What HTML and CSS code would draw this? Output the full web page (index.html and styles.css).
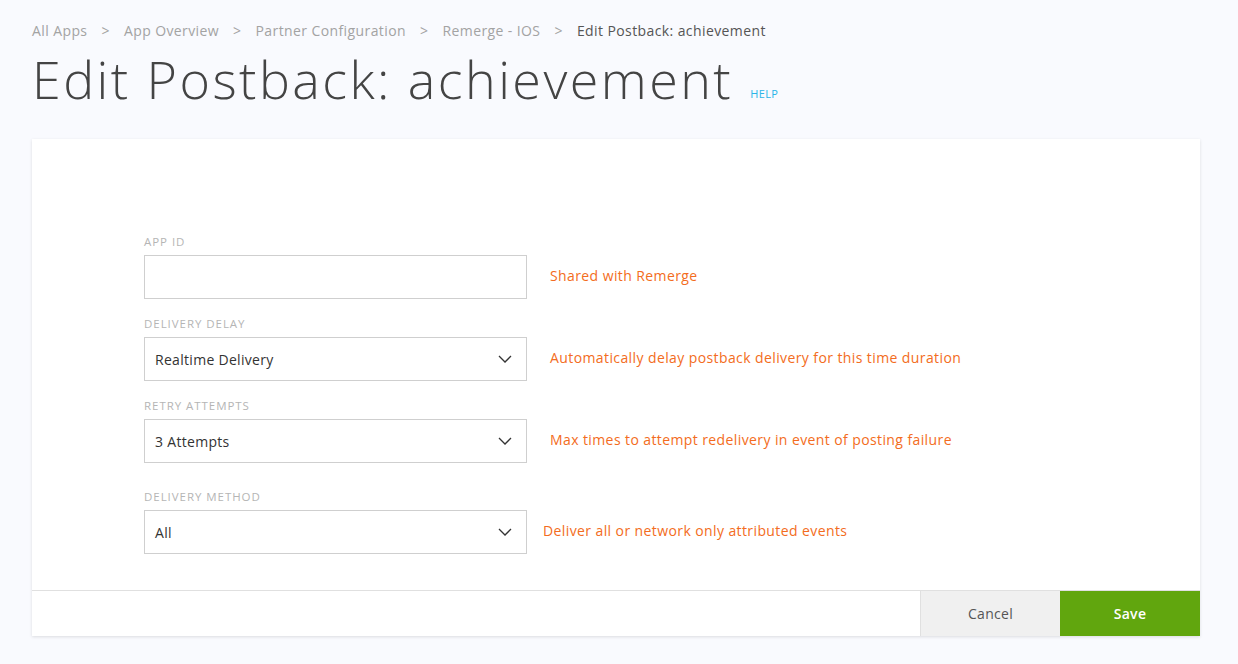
FILE: index.html
```html
<!DOCTYPE html>
<html lang="en">
<head>
    <meta charset="UTF-8">
    <meta name="viewport" content="width=device-width, initial-scale=1.0">
    <title>Edit Postback: achievement</title>
    <link rel="stylesheet" href="styles.css">
</head>
<body>
    <div class="page">
        <div class="breadcrumbs">
            <a href="#">All Apps</a>
            <span class="sep">&gt;</span>
            <a href="#">App Overview</a>
            <span class="sep">&gt;</span>
            <a href="#">Partner Configuration</a>
            <span class="sep">&gt;</span>
            <a href="#">Remerge - IOS</a>
            <span class="sep">&gt;</span>
            <span class="current">Edit Postback: achievement</span>
        </div>

        <div class="title-row">
            <h1>Edit Postback: achievement</h1>
            <a href="#" class="help">HELP</a>
        </div>

        <div class="card">
            <form class="postback-form">
                <div class="field">
                    <label>APP ID</label>
                    <div class="field-row">
                        <input type="text" class="control">
                        <span class="hint">Shared with Remerge</span>
                    </div>
                </div>

                <div class="field">
                    <label>DELIVERY DELAY</label>
                    <div class="field-row">
                        <div class="control select">
                            <span>Realtime Delivery</span>
                            <svg width="14" height="8" viewBox="0 0 14 8"><path d="M1 1l6 6 6-6" fill="none" stroke="#333" stroke-width="1.3"/></svg>
                        </div>
                        <span class="hint">Automatically delay postback delivery for this time duration</span>
                    </div>
                </div>

                <div class="field">
                    <label>RETRY ATTEMPTS</label>
                    <div class="field-row">
                        <div class="control select">
                            <span>3 Attempts</span>
                            <svg width="14" height="8" viewBox="0 0 14 8"><path d="M1 1l6 6 6-6" fill="none" stroke="#333" stroke-width="1.3"/></svg>
                        </div>
                        <span class="hint">Max times to attempt redelivery in event of posting failure</span>
                    </div>
                </div>

                <div class="field method">
                    <label>DELIVERY METHOD</label>
                    <div class="field-row">
                        <div class="control select">
                            <span>All</span>
                            <svg width="14" height="8" viewBox="0 0 14 8"><path d="M1 1l6 6 6-6" fill="none" stroke="#333" stroke-width="1.3"/></svg>
                        </div>
                        <span class="hint narrow">Deliver all or network only attributed events</span>
                    </div>
                </div>
            </form>

            <div class="card-footer">
                <button type="button" class="btn cancel">Cancel</button>
                <button type="button" class="btn save">Save</button>
            </div>
        </div>
    </div>
</body>
</html>
```

FILE: styles.css
```css
body {
    font-family: "Open Sans", Arial, sans-serif;
    margin: 0;
    padding: 0;
    background-color: #f9fafe;
    color: #444;
}

.page {
    padding: 21px 38px 28px 32px;
}

.breadcrumbs {
    font-size: 14px;
    letter-spacing: 0.4px;
    color: #a3a3a3;
    height: 20px;
    line-height: 20px;
}

.breadcrumbs a {
    color: #a3a3a3;
    text-decoration: none;
}

.breadcrumbs .sep {
    margin: 0 10px;
}

.breadcrumbs .current {
    color: #555;
}

.title-row {
    display: flex;
    align-items: flex-end;
    gap: 17px;
    height: 60px;
    margin-top: 8px;
    margin-bottom: 30px;
}

h1 {
    font-weight: 300;
    font-size: 52px;
    line-height: 60px;
    margin: 0;
    color: #444;
    letter-spacing: 2.45px;
}

.help {
    font-size: 11px;
    letter-spacing: 0.4px;
    color: #2ab4e8;
    text-decoration: none;
    margin-bottom: 8px;
}

.card {
    background: white;
    box-shadow: 0 1px 3px rgba(0, 0, 0, 0.12);
}

.postback-form {
    padding: 96px 0 36px 112px;
}

.field {
    margin-bottom: 18px;
}

.field.method {
    margin-top: 27px;
    margin-bottom: 0;
}

.field label {
    display: block;
    font-size: 11.5px;
    color: #b5b5b5;
    letter-spacing: 0.95px;
    height: 14px;
    line-height: 14px;
    margin-bottom: 6px;
}

.field-row {
    display: flex;
    align-items: center;
}

.control {
    box-sizing: border-box;
    width: 383px;
    height: 44px;
    border: 1px solid #cfcfcf;
    background: white;
    font-family: inherit;
    font-size: 14px;
    letter-spacing: 0.3px;
    color: #333;
    padding: 0 14px 0 10px;
    margin: 0;
}

.select {
    display: flex;
    align-items: center;
    justify-content: space-between;
}

.hint {
    margin-left: 23px;
    margin-top: -4px;
    font-size: 14px;
    letter-spacing: 0.4px;
    color: #f36c21;
}

.hint.narrow {
    margin-left: 16px;
}

.card-footer {
    display: flex;
    justify-content: flex-end;
    border-top: 1px solid #e0e0e0;
    height: 45px;
}

.btn {
    width: 140px;
    height: 45px;
    border: none;
    font-family: inherit;
    font-size: 14px;
    letter-spacing: 0.3px;
    cursor: pointer;
}

.cancel {
    background-color: #f0f0f0;
    color: #555;
    border-left: 1px solid #e0e0e0;
}

.save {
    background-color: #61a60e;
    color: white;
    font-weight: 600;
}
```
